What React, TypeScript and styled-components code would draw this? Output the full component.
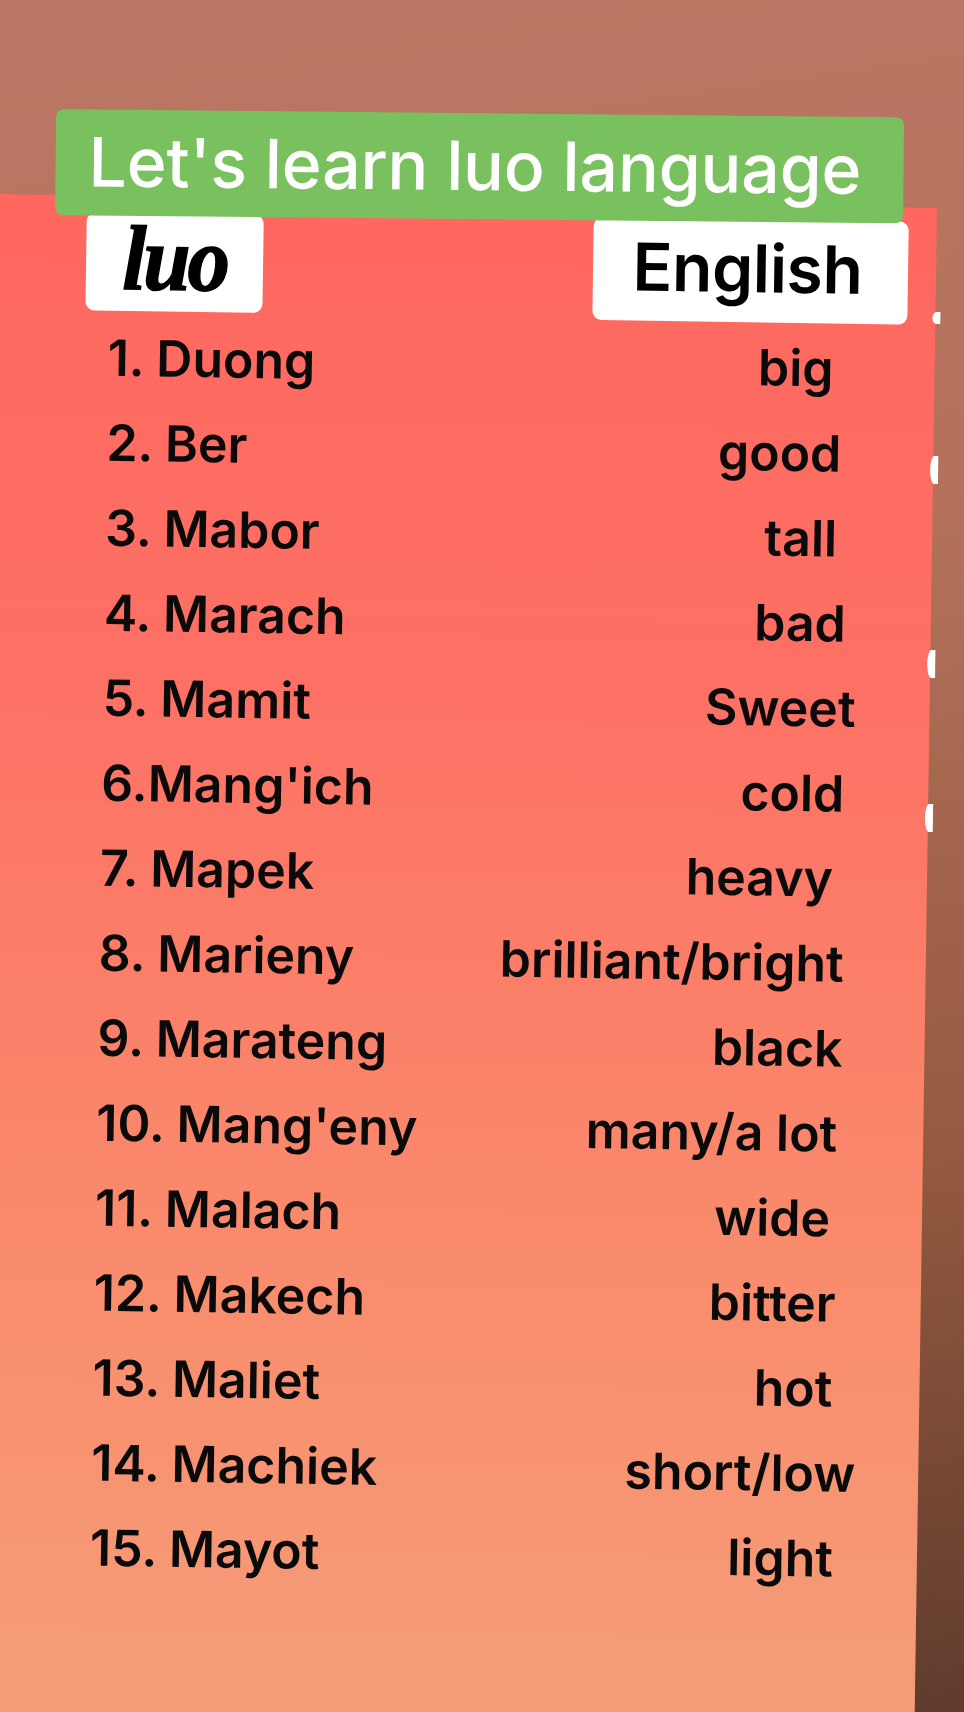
import styled, { createGlobalStyle } from 'styled-components';

const GlobalStyle = createGlobalStyle`
  html, body {
    margin: 0;
    padding: 0;
  }
  body {
    font-family: Inter, "Liberation Sans", Arial, sans-serif;
    background: #b97561;
  }
`;

const Page = styled.div`
  width: 964px;
  height: 1712px;
  overflow: hidden;
  position: relative;
  background: linear-gradient(
    172deg,
    #bb7763 0%,
    #b3715b 35%,
    #94593f 70%,
    #5f3b2c 100%
  );
`;

// the paper sheet, photographed at a slight tilt
const Sheet = styled.div`
  position: relative;
  display: flex;
  flex-direction: column;
  width: 977px;
  min-height: 1580px;
  margin: 208px 0 0 -40px;
  background: linear-gradient(
    180deg,
    #ff675f 0%,
    #fd7064 30%,
    #f98a6c 65%,
    #f4a07a 100%
  );
  transform-origin: top right;
  transform: rotate(0.85deg);
`;

const Banner = styled.div`
  box-sizing: border-box;
  width: 848px;
  height: 106px;
  margin: -88px 0 0 95px;
  padding-left: 33px;
  background: #79c15f;
  border-radius: 8px;
  transform: rotate(-0.3deg);
  color: #ffffff;
  font-family: Inter, "Liberation Sans", sans-serif;
  font-size: 68px;
  font-weight: 500;
  letter-spacing: -0.2px;
  line-height: 104px;
  white-space: nowrap;
`;

const HeaderRow = styled.div`
  display: flex;
  justify-content: space-between;
  align-items: flex-start;
  padding: 0 28px 0 127px;
  margin-top: -4px;
`;

const Tag = styled.div<{ $w: number; $h: number; $drop?: number }>`
  display: flex;
  align-items: center;
  justify-content: center;
  width: ${({ $w }) => $w}px;
  height: ${({ $h }) => $h}px;
  margin-top: ${({ $drop }) => $drop || 0}px;
  background: #ffffff;
  border-radius: 9px;
  color: #000000;
`;

const LuoText = styled.span`
  font-family: "Liberation Serif", "DejaVu Serif", serif;
  font-style: italic;
  font-weight: 700;
  font-size: 92px;
  line-height: 1;
  margin-top: -8px;
  letter-spacing: -3px;
  transform: scaleX(0.92);
  -webkit-text-stroke: 1.5px #000;
`;

const EnglishText = styled.span`
  font-family: Inter, "Liberation Sans", sans-serif;
  font-weight: 600;
  font-size: 66px;
  line-height: 1;
  margin: -6px 0 0 -6px;
  letter-spacing: -0.4px;
`;

const List = styled.div`
  display: flex;
  flex-direction: column;
  margin-top: 3px;
`;

const Row = styled.div<{ $right: number }>`
  display: flex;
  justify-content: space-between;
  align-items: baseline;
  height: 85px;
  padding: 0 ${({ $right }) => $right}px 0 150px;
  font-family: Inter, "Liberation Sans", sans-serif;
  font-weight: 600;
  font-size: 50px;
  line-height: 85px;
  color: #0a0a0a;
  white-space: nowrap;
`;

const Word = styled.span``;

const Meaning = styled.span``;

// bits of white from the next layer peeking past the sheet edge
const Nub = styled.div<{ $top: number; $h: number }>`
  position: absolute;
  right: -5px;
  top: ${({ $top }) => $top}px;
  width: 8px;
  height: ${({ $h }) => $h}px;
  background: #ffffff;
  border-radius: 50% 0 0 50%;
`;

const words = [
  { luo: '1. Duong', en: 'big', right: 101 },
  { luo: '2. Ber', en: 'good', right: 92 },
  { luo: '3. Mabor', en: 'tall', right: 95 },
  { luo: '4. Marach', en: 'bad', right: 85 },
  { luo: '5. Mamit', en: 'Sweet', right: 74 },
  { luo: "6.Mang'ich", en: 'cold', right: 84 },
  { luo: '7. Mapek', en: 'heavy', right: 94 },
  { luo: '8. Marieny', en: 'brilliant/bright', right: 82 },
  { luo: '9. Marateng', en: 'black', right: 82 },
  { luo: "10. Mang'eny", en: 'many/a lot', right: 86 },
  { luo: '11. Malach', en: 'wide', right: 92 },
  { luo: '12. Makech', en: 'bitter', right: 85 },
  { luo: '13. Maliet', en: 'hot', right: 87 },
  { luo: '14. Machiek', en: 'short/low', right: 63 },
  { luo: '15. Mayot', en: 'light', right: 84 },
];

const App = () => {
  return (
    <Page>
      <GlobalStyle />
      <Sheet>
        <Banner>Let's learn luo language</Banner>
        <HeaderRow>
          <Tag $w={177} $h={98} $drop={3}>
            <LuoText>luo</LuoText>
          </Tag>
          <Tag $w={315} $h={103}>
            <EnglishText>English</EnglishText>
          </Tag>
        </HeaderRow>
        <List>
          {words.map((w) => (
            <Row key={w.luo} $right={w.right}>
              <Word>{w.luo}</Word>
              <Meaning>{w.en}</Meaning>
            </Row>
          ))}
        </List>
        <Nub $top={104} $h={12} />
        <Nub $top={248} $h={28} />
        <Nub $top={442} $h={28} />
        <Nub $top={596} $h={28} />
      </Sheet>
    </Page>
  );
};

export default App;
